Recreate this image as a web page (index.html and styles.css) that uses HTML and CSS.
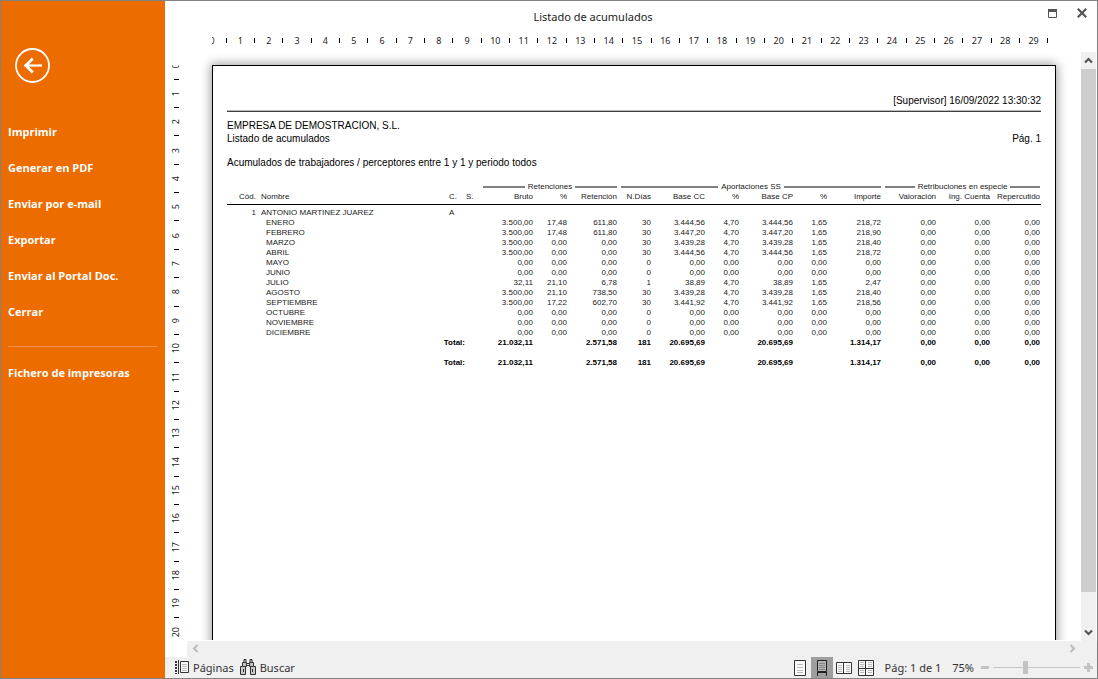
FILE: index.html
```html
<!DOCTYPE html>
<html lang="es">
<head>
<meta charset="utf-8">
<title>Listado de acumulados</title>
<link rel="stylesheet" href="styles.css">
</head>
<body>
<div class="window">
  <nav class="sidebar">
    <button class="back" aria-label="Volver">
      <svg width="35" height="35" viewBox="0 0 35 35" fill="none" stroke="#fff"><circle cx="17.500" cy="17.500" r="16.500" stroke-width="1.800"/><path d="M9.500 17.500H27" stroke-width="2.200"/><path d="M17.800 10.500L10.800 17.500l7 7" stroke-width="2.800"/></svg>
    </button>
    <button class="nav-item">Imprimir</button>
    <button class="nav-item">Generar en PDF</button>
    <button class="nav-item">Enviar por e-mail</button>
    <button class="nav-item">Exportar</button>
    <button class="nav-item">Enviar al Portal Doc.</button>
    <button class="nav-item">Cerrar</button>
    <hr class="nav-divider">
    <button class="nav-item">Fichero de impresoras</button>
  </nav>

  <main class="preview">
    <header class="titlebar">
      <h1 class="title">Listado de acumulados</h1>
      <div class="window-buttons">
        <button class="icon-button" aria-label="Maximizar"><svg width="9" height="9" viewBox="0 0 9 9"><path d="M.5 1v7.500h8V1" fill="none" stroke="#555"/><path d="M0 0h9v3H0z" fill="#555"/></svg></button>
        <button class="icon-button" aria-label="Cerrar ventana"><svg width="10" height="10" viewBox="0 0 10 10"><path d="M.8.8l8.400 8.400M9.200.8L.8 9.200" stroke="#555" stroke-width="2.200"/></svg></button>
      </div>
    </header>

    <ol class="ruler-h">
      <li><span>0</span></li><li><span>1</span></li><li><span>2</span></li><li><span>3</span></li><li><span>4</span></li>
      <li><span>5</span></li><li><span>6</span></li><li><span>7</span></li><li><span>8</span></li><li><span>9</span></li>
      <li><span>10</span></li><li><span>11</span></li><li><span>12</span></li><li><span>13</span></li><li><span>14</span></li>
      <li><span>15</span></li><li><span>16</span></li><li><span>17</span></li><li><span>18</span></li><li><span>19</span></li>
      <li><span>20</span></li><li><span>21</span></li><li><span>22</span></li><li><span>23</span></li><li><span>24</span></li>
      <li><span>25</span></li><li><span>26</span></li><li><span>27</span></li><li><span>28</span></li><li><span>29</span></li>
    </ol>

    <div class="stage">
      <ol class="ruler-v">
        <li><span>0</span></li><li><span>1</span></li><li><span>2</span></li><li><span>3</span></li><li><span>4</span></li>
        <li><span>5</span></li><li><span>6</span></li><li><span>7</span></li><li><span>8</span></li><li><span>9</span></li>
        <li><span>10</span></li><li><span>11</span></li><li><span>12</span></li><li><span>13</span></li><li><span>14</span></li>
        <li><span>15</span></li><li><span>16</span></li><li><span>17</span></li><li><span>18</span></li><li><span>19</span></li>
        <li><span>20</span></li>
      </ol>

      <div class="canvas">
        <article class="sheet">
          <p class="stamp">[Supervisor] 16/09/2022 13:30:32</p>
          <p class="line">EMPRESA DE DEMOSTRACION, S.L.</p>
          <p class="line line-split"><span>Listado de acumulados</span><span>Pág. 1</span></p>
          <p class="line criteria">Acumulados de trabajadores / perceptores entre 1 y 1 y periodo todos</p>
          <table class="report">
            <colgroup>
              <col class="w-code"><col class="w-name"><col class="w-c"><col class="w-s">
              <col class="w-amount"><col class="w-pct"><col class="w-ret">
              <col class="w-pct"><col class="w-amount"><col class="w-pct"><col class="w-amount"><col class="w-pct"><col class="w-amount">
              <col class="w-val"><col class="w-amount"><col class="w-rep">
            </colgroup>
            <thead>
              <tr><td colspan="4"></td><th colspan="3"><div class="group">Retenciones</div></th><th colspan="6"><div class="group">Aportaciones SS</div></th><th colspan="3"><div class="group">Retribuciones en especie</div></th></tr>
              <tr class="columns"><th>Cód.</th><th class="name">Nombre</th><th class="left">C.</th><th class="left">S.</th><th>Bruto</th><th>%</th><th>Retención</th><th>N.Días</th><th>Base CC</th><th>%</th><th>Base CP</th><th>%</th><th>Importe</th><th>Valoración</th><th>Ing. Cuenta</th><th>Repercutido</th></tr>
            </thead>
            <tbody>
              <tr class="worker"><td>1</td><td class="name">ANTONIO MARTINEZ JUAREZ</td><td class="left">A</td><td colspan="13"></td></tr>
              <tr><td></td><td class="month">ENERO</td><td></td><td></td><td>3.500,00</td><td>17,48</td><td>611,80</td><td>30</td><td>3.444,56</td><td>4,70</td><td>3.444,56</td><td>1,65</td><td>218,72</td><td>0,00</td><td>0,00</td><td>0,00</td></tr>
              <tr><td></td><td class="month">FEBRERO</td><td></td><td></td><td>3.500,00</td><td>17,48</td><td>611,80</td><td>30</td><td>3.447,20</td><td>4,70</td><td>3.447,20</td><td>1,65</td><td>218,90</td><td>0,00</td><td>0,00</td><td>0,00</td></tr>
              <tr><td></td><td class="month">MARZO</td><td></td><td></td><td>3.500,00</td><td>0,00</td><td>0,00</td><td>30</td><td>3.439,28</td><td>4,70</td><td>3.439,28</td><td>1,65</td><td>218,40</td><td>0,00</td><td>0,00</td><td>0,00</td></tr>
              <tr><td></td><td class="month">ABRIL</td><td></td><td></td><td>3.500,00</td><td>0,00</td><td>0,00</td><td>30</td><td>3.444,56</td><td>4,70</td><td>3.444,56</td><td>1,65</td><td>218,72</td><td>0,00</td><td>0,00</td><td>0,00</td></tr>
              <tr><td></td><td class="month">MAYO</td><td></td><td></td><td>0,00</td><td>0,00</td><td>0,00</td><td>0</td><td>0,00</td><td>0,00</td><td>0,00</td><td>0,00</td><td>0,00</td><td>0,00</td><td>0,00</td><td>0,00</td></tr>
              <tr><td></td><td class="month">JUNIO</td><td></td><td></td><td>0,00</td><td>0,00</td><td>0,00</td><td>0</td><td>0,00</td><td>0,00</td><td>0,00</td><td>0,00</td><td>0,00</td><td>0,00</td><td>0,00</td><td>0,00</td></tr>
              <tr><td></td><td class="month">JULIO</td><td></td><td></td><td>32,11</td><td>21,10</td><td>6,78</td><td>1</td><td>38,89</td><td>4,70</td><td>38,89</td><td>1,65</td><td>2,47</td><td>0,00</td><td>0,00</td><td>0,00</td></tr>
              <tr><td></td><td class="month">AGOSTO</td><td></td><td></td><td>3.500,00</td><td>21,10</td><td>738,50</td><td>30</td><td>3.439,28</td><td>4,70</td><td>3.439,28</td><td>1,65</td><td>218,40</td><td>0,00</td><td>0,00</td><td>0,00</td></tr>
              <tr><td></td><td class="month">SEPTIEMBRE</td><td></td><td></td><td>3.500,00</td><td>17,22</td><td>602,70</td><td>30</td><td>3.441,92</td><td>4,70</td><td>3.441,92</td><td>1,65</td><td>218,56</td><td>0,00</td><td>0,00</td><td>0,00</td></tr>
              <tr><td></td><td class="month">OCTUBRE</td><td></td><td></td><td>0,00</td><td>0,00</td><td>0,00</td><td>0</td><td>0,00</td><td>0,00</td><td>0,00</td><td>0,00</td><td>0,00</td><td>0,00</td><td>0,00</td><td>0,00</td></tr>
              <tr><td></td><td class="month">NOVIEMBRE</td><td></td><td></td><td>0,00</td><td>0,00</td><td>0,00</td><td>0</td><td>0,00</td><td>0,00</td><td>0,00</td><td>0,00</td><td>0,00</td><td>0,00</td><td>0,00</td><td>0,00</td></tr>
              <tr><td></td><td class="month">DICIEMBRE</td><td></td><td></td><td>0,00</td><td>0,00</td><td>0,00</td><td>0</td><td>0,00</td><td>0,00</td><td>0,00</td><td>0,00</td><td>0,00</td><td>0,00</td><td>0,00</td><td>0,00</td></tr>
            </tbody>
            <tfoot>
              <tr class="total"><th colspan="3">Total:</th><td></td><td>21.032,11</td><td></td><td>2.571,58</td><td>181</td><td>20.695,69</td><td></td><td>20.695,69</td><td></td><td>1.314,17</td><td>0,00</td><td>0,00</td><td>0,00</td></tr>
              <tr class="total grand"><th colspan="3">Total:</th><td></td><td>21.032,11</td><td></td><td>2.571,58</td><td>181</td><td>20.695,69</td><td></td><td>20.695,69</td><td></td><td>1.314,17</td><td>0,00</td><td>0,00</td><td>0,00</td></tr>
            </tfoot>
          </table>
        </article>
      </div>

      <div class="scroll-v">
        <button class="scroll-button" aria-label="Subir"><svg width="9" height="7" viewBox="0 0 9 7"><path d="M1 5.500L4.500 2 8 5.500" fill="none" stroke="#555" stroke-width="2.200"/></svg></button>
        <div class="scroll-thumb"></div>
        <div class="scroll-rest"></div>
        <button class="scroll-button" aria-label="Bajar"><svg width="9" height="7" viewBox="0 0 9 7"><path d="M1 1.500L4.500 5 8 1.500" fill="none" stroke="#555" stroke-width="2.200"/></svg></button>
      </div>
    </div>

    <div class="scroll-h">
      <button class="scroll-button" aria-label="Izquierda"><svg width="7" height="9" viewBox="0 0 7 9"><path d="M5.500 1L2 4.500 5.500 8" fill="none" stroke="#bcbcbc" stroke-width="2"/></svg></button>
      <button class="scroll-button" aria-label="Derecha"><svg width="7" height="9" viewBox="0 0 7 9"><path d="M1.500 1L5 4.500 1.500 8" fill="none" stroke="#bcbcbc" stroke-width="2"/></svg></button>
    </div>

    <footer class="status">
      <button class="tool"><svg width="14" height="14" viewBox="0 0 14 14"><path d="M1 1v13" stroke="#333" stroke-width="2" stroke-dasharray="2 1"/><path d="M3.500 0v14" stroke="#333"/><path d="M5.500 1.500h8v11h-8z" fill="#fafafa" stroke="#333"/><path d="M7 4.500h5M7 6.500h5M7 8.500h5M7 10.500h5" stroke="#bbb"/></svg>Páginas</button>
      <button class="tool"><svg width="16" height="16" viewBox="0 0 16 16"><g fill="#c8c8c8" stroke="#333"><path d="M.5 7.500h5v8h-5zM10.500 7.500h5v8h-5z"/><path d="M2.500 3.500h4v4h-4zM9.500 3.500h4v4h-4z"/><path d="M4 .5h2v3H4zM10 .5h2v3h-2z"/></g><path d="M7 4.500h2M7 6.500h2M3.500 10v3M12.500 10v3" stroke="#333"/></svg>Buscar</button>
      <div class="views">
        <button class="view" aria-label="Página única"><svg width="12" height="16" viewBox="0 0 12 16"><path d="M.5.5h11v15H.5z" fill="#fafafa" stroke="#333"/><path d="M3 4.500h6M3 7.500h6M3 10.500h6M3 12.500h6" stroke="#bbb"/></svg></button>
        <button class="view view-on" aria-label="Página continua"><svg width="10" height="16" viewBox="0 0 10 16"><path d="M.5.5h9v11h-9zM.5 12v4M9.500 12v4" fill="#b4b4b4" stroke="#222"/><path d="M0 12.500h10" stroke="#222"/><path d="M2 3.500h6M2 5.500h6M2 7.500h6M2 9.500h6" stroke="#858585"/></svg></button>
        <button class="view" aria-label="Dos páginas"><svg width="16" height="12" viewBox="0 0 16 12"><path d="M.5.5h15v11H.5z" fill="#fafafa" stroke="#333"/><path d="M7 1h1v10H7z" fill="#333"/><path d="M2 3.500h4M2 5.500h4M2 7.500h4M2 9.500h4M10 3.500h4M10 5.500h4M10 7.500h4M10 9.500h4" stroke="#bbb"/></svg></button>
        <button class="view" aria-label="Cuatro páginas"><svg width="16" height="16" viewBox="0 0 16 16"><path d="M.5.5h15v15H.5z" fill="#fafafa" stroke="#333"/><path d="M7 1h1v14H7zM1 8h14v1H1z" fill="#333"/><path d="M2 2.500h4M2 4.500h4M2 6.500h4M2 10.500h4M2 12.500h4M10 2.500h4M10 4.500h4M10 6.500h4M10 10.500h4M10 12.500h4" stroke="#bbb"/></svg></button>
      </div>
      <span class="page-of">Pág: 1 de 1</span>
      <label class="zoom-value" for="zoom">75%</label>
      <button class="icon-button" aria-label="Alejar"><svg width="8" height="3" viewBox="0 0 8 3"><path d="M0 0h8v3H0z" fill="#c3c3c3"/></svg></button>
      <input class="zoom" id="zoom" type="range" min="0" max="100" value="37">
      <button class="icon-button" aria-label="Acercar"><svg width="9" height="9" viewBox="0 0 9 9"><path d="M0 3h3V0h3v3h3v3H6v3H3V6H0z" fill="#c3c3c3"/></svg></button>
    </footer>
  </main>
</div>
</body>
</html>
```
FILE: styles.css
```css
* { box-sizing: border-box; }
body {
  margin: 0;
  font-family: "Noto Sans", "Open Sans", sans-serif;
  font-size: 11px;
  color: #1c1c1c;
}
button {
  margin: 0;
  padding: 0;
  border: 0;
  background: none;
  font: inherit;
  color: inherit;
}
svg { display: block; flex: none; }
ol { margin: 0; padding: 0; list-style: none; }
p { margin: 0; }

.window {
  display: flex;
  height: 100vh;
  border: 1px solid #838383;
  background: #fff;
  overflow: hidden;
}

/* Sidebar */
.sidebar {
  flex: none;
  width: 164px;
  padding: 47px 8px 0 7px;
  background: #ec6c00;
  color: #fff;
  font-family: "Open Sans", "Noto Sans", sans-serif;
}
.back { display: block; margin: 0 0 30px 7px; }
.nav-item {
  display: block;
  width: 100%;
  height: 36px;
  text-align: left;
  font-weight: 700;
}
.nav-divider {
  margin: 17px 0 7px;
  border: 0;
  border-top: 1px solid #f19248;
}

/* Preview column */
.preview {
  flex: 1;
  min-width: 0;
  display: flex;
  flex-direction: column;
}
.titlebar {
  display: grid;
  grid-template-columns: 1fr auto 1fr;
  align-items: center;
  height: 30px;
}
.title {
  grid-column: 2;
  margin: 0;
  font-size: 11px;
  font-weight: 400;
  padding-right: 76px;
}
.window-buttons {
  display: flex;
  justify-content: flex-end;
  align-items: center;
  gap: 20px;
  padding: 0 10px 6px 0;
}

/* Rulers */
.ruler-h {
  display: flex;
  height: 21px;
  padding: 0 42px 2px 40px;
  font-size: 9px;
  line-height: 19px;
}
.ruler-h li {
  flex: 1;
  display: grid;
  grid-template-columns: 1fr 1fr;
  place-items: center;
}
.ruler-h li::after { content: ""; width: 1px; height: 5px; background: #000; }
.ruler-h li:first-child span { clip-path: inset(0 0 0 50%); }
.stage { flex: 1; min-height: 0; display: flex; }
.ruler-v {
  flex: none;
  width: 22px;
  padding: 6px 0 2px;
  display: flex;
  flex-direction: column;
  font-size: 9px;
  line-height: 12px;
}
.ruler-v li {
  flex: 2 1 0;
  min-height: 0;
  display: grid;
  grid-template-rows: 1fr 1fr;
  place-items: center;
}
.ruler-v li::after { content: ""; width: 5px; height: 1px; background: #000; }
.ruler-v li:last-child { flex-grow: 1; grid-template-rows: 1fr; }
.ruler-v li:last-child::after { display: none; }
.ruler-v span { writing-mode: vertical-rl; transform: rotate(180deg); }
.ruler-v li:first-child span { clip-path: inset(0 0 50% 0); }

/* Sheet */
.canvas {
  flex: 1;
  min-width: 0;
  display: flex;
  padding: 13px 25px 0;
  margin-bottom: 1px;
  overflow: hidden;
}
.sheet {
  flex: 1;
  height: 100vh;
  padding: 28px 14px 0;
  border: 1px solid #000;
  background: #fff;
  box-shadow: 0 0 10px 1px rgba(0, 0, 0, 0.4);
  font-family: "Liberation Sans", Arial, sans-serif;
  font-size: 10px;
  line-height: 13px;
  color: #000;
}
.stamp {
  padding-bottom: 4px;
  margin-bottom: 7px;
  border-bottom: 1px solid #404040;
  box-shadow: inset 0 -1px #bbb;
  text-align: right;
}
.line-split { display: flex; justify-content: space-between; }
.criteria { margin: 11px 0 13px; }
.report {
  width: 100%;
  table-layout: fixed;
  border-collapse: collapse;
  font-size: 8px;
  line-height: 10px;
  color: #1a1a1a;
}
.report th, .report td {
  padding: 0 1px 0 0;
  height: 10px;
  text-align: right;
  font-weight: 400;
  white-space: nowrap;
}
.report .left, .report .name, .report .month { text-align: left; }
.report .name { padding-left: 4px; }
.report .month { padding-left: 9px; }
.report .columns th { padding-bottom: 2px; border-bottom: 1px solid #000; }
.report .worker td { padding-top: 3px; }
.report .total th, .report .total td { font-weight: 700; color: #000; }
.report .grand th, .report .grand td { padding-top: 10px; }
.group { display: flex; align-items: center; gap: 3px; padding-left: 3px; }
.group::before, .group::after { content: ""; flex: 1; height: 2px; background: #808080; }
.w-code { width: 30px; }
.w-name { width: 192px; }
.w-c { width: 17px; }
.w-s { width: 14px; }
.w-amount { width: 54px; }
.w-pct { width: 34px; }
.w-ret { width: 50px; }
.w-val { width: 55px; }
.w-rep { width: 50px; }

/* Scroll bars */
.scroll-button { display: grid; place-items: center; flex: none; width: 16px; height: 17px; }
.scroll-v {
  flex: none;
  width: 15px;
  margin-right: 1px;
  display: flex;
  flex-direction: column;
  background: #f0f0f0;
}
.scroll-v .scroll-button { width: 15px; }
.scroll-thumb { flex: 523; background: #cdcdcd; }
.scroll-rest { flex: 32; }
.scroll-h {
  display: flex;
  justify-content: space-between;
  height: 16px;
  margin-left: 22px;
  padding-right: 17px;
  background: #f0f0f0;
}
.scroll-h .scroll-button { height: 15px; }

/* Status bar */
.status {
  display: flex;
  align-items: center;
  height: 21px;
  padding: 0 4px 0 10px;
  background: #f0f0f0;
  line-height: 19px;
  color: #333;
}
.tool { display: flex; align-items: center; gap: 4px; margin-right: 6px; padding-bottom: 1px; }
.views { display: flex; align-self: stretch; margin-left: auto; }
.view { display: grid; place-items: center; width: 22px; }
.view-on { background: #9e9e9e; }
.page-of { margin: 0 11px 0 8px; padding-bottom: 1px; }
.zoom-value { margin-right: 7px; padding-bottom: 1px; }
.icon-button { display: block; }
.zoom {
  appearance: none;
  width: 87px;
  height: 13px;
  margin: 0 4px;
  background: linear-gradient(#c6c6c6, #c6c6c6) center / 100% 1px no-repeat;
}
.zoom::-webkit-slider-thumb {
  appearance: none;
  width: 5px;
  height: 13px;
  background: #c3c3c3;
}
```
